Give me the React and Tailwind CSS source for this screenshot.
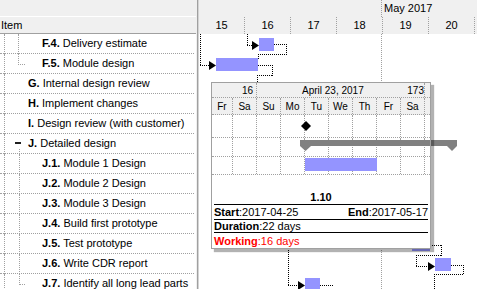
const rows = [
  { code: "F.4.", name: "Delivery estimate", level: 2, guide: "full", gx: 18 },
  { code: "F.5.", name: "Module design", level: 2, guide: "last", gx: 18 },
  { code: "G.", name: "Internal design review", level: 1 },
  { code: "H.", name: "Implement changes", level: 1 },
  { code: "I.", name: "Design review (with customer)", level: 1 },
  { code: "J.", name: "Detailed design", level: 1, parent: true, gx: 19 },
  { code: "J.1.", name: "Module 1 Design", level: 2, guide: "full", gx: 19 },
  { code: "J.2.", name: "Module 2 Design", level: 2, guide: "full", gx: 19 },
  { code: "J.3.", name: "Module 3 Design", level: 2, guide: "full", gx: 19 },
  { code: "J.4.", name: "Build first prototype", level: 2, guide: "full", gx: 19 },
  { code: "J.5.", name: "Test prototype", level: 2, guide: "full", gx: 19 },
  { code: "J.6.", name: "Write CDR report", level: 2, guide: "full", gx: 19 },
  { code: "J.7.", name: "Identify all long lead parts", level: 2, guide: "last", gx: 19 },
];

const days = ["15", "16", "17", "18", "19", "20"];
const weekDays = ["Fr", "Sa", "Su", "Mo", "Tu", "We", "Th", "Fr", "Sa"];

// dotted link segments, page coordinates
const H = (y, a, b) => ({ x1: Math.min(a, b), y1: y + 0.5, x2: Math.max(a, b) + 1, y2: y + 0.5 });
const V = (x, a, b) => ({ x1: x + 0.5, y1: Math.min(a, b), x2: x + 0.5, y2: Math.max(a, b) + 1 });

const links = [
  V(247, 34, 45), H(45, 247, 252),
  H(44, 274, 286), V(286, 44, 54), H(54, 258, 286), V(258, 54, 58),
  V(200, 34, 65), H(65, 200, 209),
  H(65, 258, 272), V(272, 65, 75), H(75, 257, 272), V(257, 75, 82),
  H(245, 430, 441), V(441, 245, 255), H(255, 416, 441), V(416, 255, 266), H(266, 416, 428),
  H(265, 451, 463), V(463, 265, 274), H(274, 434, 463), V(434, 274, 289),
  V(288, 248, 285), H(285, 288, 298),
  H(285, 320, 333),
];
const arrows = [[252, 45], [209, 65], [428, 266], [298, 285]];
const bars = [
  [259, 38, 15, 13],
  [216, 58, 42, 13],
  [412, 238, 18, 13],
  [435, 258, 16, 13],
  [305, 278, 15, 13],
];

const TreeRow = ({ row }) => (
  <div className="relative flex h-[20px] items-center border-b border-dotted border-[#a0a0a0] whitespace-nowrap">
    <span className="absolute left-[4px] top-0 h-[20px] border-l border-dotted border-[#a0a0a0]" />
    {row.guide === "full" && (
      <span
        className={`absolute top-0 h-[20px] border-l border-dotted border-[#a0a0a0] ${row.gx === 18 ? "left-[18px]" : "left-[19px]"}`}
      />
    )}
    {row.guide === "last" && (
      <>
        <span
          className={`absolute top-0 h-[11px] border-l border-dotted border-[#a0a0a0] ${row.gx === 18 ? "left-[18px]" : "left-[19px]"}`}
        />
        <span
          className={`absolute top-[10px] h-0 border-t border-dotted border-[#a0a0a0] ${row.gx === 18 ? "left-[18px] w-[7px]" : "left-[19px] w-[6px]"}`}
        />
      </>
    )}
    {row.parent && (
      <>
        <span className="absolute left-[15px] top-[8px] h-[2px] w-[6px] bg-[#202020]" />
        <span className="absolute left-[19px] top-[15px] h-[5px] border-l border-dotted border-[#a0a0a0]" />
      </>
    )}
    <span className={row.level === 2 ? "pl-[42px]" : "pl-[28px]"}>
      <b>{row.code}</b> {row.name}
    </span>
  </div>
);

const Tooltip = () => (
  <div className="absolute left-[211px] top-[82px] h-[167px] w-[220px] overflow-hidden border border-[#a0a0a0] bg-white shadow-[3px_3px_1px_rgba(0,0,0,0.3)]">
    <div className="flex h-[15px] items-center border-b border-dotted border-[#a0a0a0] bg-[#f0f0f0] text-[10px]">
      <div className="flex h-full w-[45px] shrink-0 items-center justify-end border-r border-dotted border-[#a0a0a0] pr-[3px]">16</div>
      <div className="flex h-full w-[168px] shrink-0 items-center border-r border-dotted border-[#a0a0a0] pl-[45px]">
        <span>April 23, 2017</span>
        <span className="ml-auto">173</span>
      </div>
    </div>
    <div className="flex h-[17px] border-b border-dotted border-[#a0a0a0] bg-[#f0f0f0] text-[10px]">
      {weekDays.map((d, i) => (
        <div
          key={i}
          className={`flex h-full shrink-0 items-center justify-center border-r border-dotted border-[#a0a0a0] ${i === 0 ? "w-[21px]" : "w-[24px]"}`}
        >
          {d}
        </div>
      ))}
    </div>
    <div className="relative">
      {["h-[23px]", "h-[19px]", "h-[18px]"].map((h, r) => (
        <div key={r} className={`flex border-b border-dotted border-[#a0a0a0] ${h}`}>
          {weekDays.map((d, i) => (
            <div
              key={i}
              className={`h-full shrink-0 border-r border-dotted border-[#a0a0a0] ${i === 0 ? "w-[21px]" : "w-[24px]"}`}
            />
          ))}
        </div>
      ))}
      <svg className="absolute left-0 top-0" width="218" height="60" viewBox="212 115 218 60" shapeRendering="crispEdges">
        <polygon points="306,121 311,126 306,131 301,126" fill="#000" shapeRendering="auto" />
        <rect x="300" y="140" width="130" height="6" fill="#808080" />
        <polygon points="300,146 311,146 305.5,151" fill="#808080" shapeRendering="auto" />
        <rect x="305" y="158" width="72" height="13" fill="#9494ff" />
      </svg>
    </div>
    <div className="mx-[2px] text-[11px] leading-[14px]">
      <div className="h-[30px] border-b border-black pt-[15px] text-center font-bold">1.10</div>
      <div className="flex h-[15px] items-center justify-between border-b border-black">
        <span><b>Start</b>:2017-04-25</span>
        <span><b>End</b>:2017-05-17</span>
      </div>
      <div className="flex h-[13px] items-center border-b border-black">
        <span><b>Duration</b>:22 days</span>
      </div>
      <div className="flex h-[15px] items-center text-[#ff0000]">
        <span><b>Working</b>:16 days</span>
      </div>
    </div>
  </div>
);

export default function App() {
  return (
    <div className="relative flex h-[289px] w-[477px] overflow-hidden bg-white font-['Liberation_Sans',Arial,sans-serif] text-[11px] text-black">
      <div className="w-[196px] shrink-0">
        <div className="h-[17px] border-b border-white bg-[#f0f0f0]" />
        <div className="flex h-[17px] items-center border-b border-[#a0a0a0] bg-[#f0f0f0] pl-[1px]">Item</div>
        <div className="mr-[2px]">
          {rows.map((r) => (
            <TreeRow key={r.code} row={r} />
          ))}
        </div>
      </div>

      <div className="flex w-[3px] shrink-0">
        <div className="w-px bg-[#f0f0f0]" />
        <div className="w-px bg-[#a0a0a0]" />
        <div className="w-px bg-[#d4d4d4]" />
      </div>

      <div className="flex flex-1 flex-col">
        <div className="flex h-[17px] bg-[#f0f0f0]">
          <div className="w-[182px] shrink-0" />
          <div className="flex items-center border-l border-dotted border-[#a0a0a0] pl-[2px]">May 2017</div>
        </div>
        <div className="flex h-[17px] bg-[#f0f0f0]">
          {days.map((d) => (
            <div key={d} className="flex h-full w-[46px] shrink-0 items-center justify-center border-r border-dotted border-[#a0a0a0]">
              {d}
            </div>
          ))}
        </div>
        <div className="relative flex-1">
          <div className="absolute left-[182px] top-0 h-full border-l border-dotted border-[#a0a0a0]" />
          <svg className="absolute left-0 top-0" width="278" height="255" viewBox="199 34 278 255" shapeRendering="crispEdges">
            {bars.map(([x, y, w, h], i) => (
              <rect key={i} x={x} y={y} width={w} height={h} fill="#9494ff" />
            ))}
            <rect x="300" y="140" width="157" height="6" fill="#808080" />
            <polygon points="447,146 457,146 452,151" fill="#808080" shapeRendering="auto" />
            {links.map((l, i) => (
              <line key={i} {...l} stroke="#000" strokeDasharray="1 1" />
            ))}
            {arrows.map(([x, y], i) => (
              <polygon key={i} points={`${x},${y - 4} ${x + 7},${y + 0.5} ${x},${y + 5}`} fill="#000" shapeRendering="auto" />
            ))}
          </svg>
        </div>
      </div>

      <Tooltip />
    </div>
  );
}
